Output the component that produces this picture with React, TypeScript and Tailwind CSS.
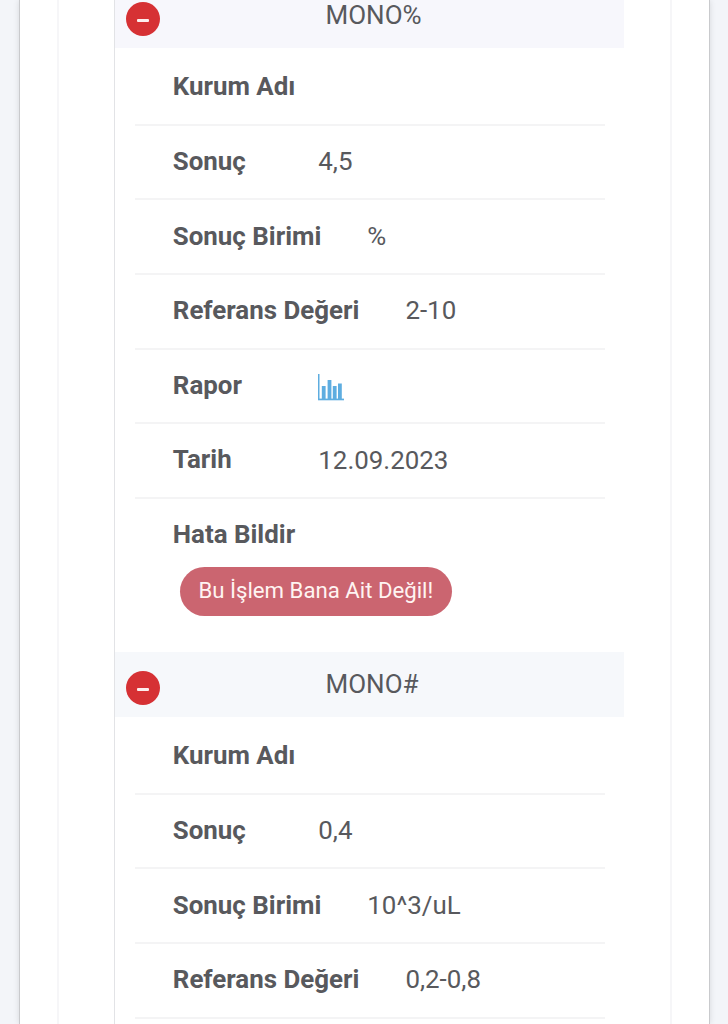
import type { ReactNode } from "react"

type Row = { label: string; value?: ReactNode }

function ChartIcon() {
  return (
    <svg className="mt-[5px] h-[27px] w-[27px]" viewBox="0 0 27 27" fill="#5eade0">
      <rect x="0" y="0" width="1.5" height="26" />
      <rect x="0" y="24.6" width="26" height="1.7" />
      <rect x="3.8" y="12" width="3.8" height="13" />
      <rect x="9.6" y="6" width="3.8" height="19" />
      <rect x="14.8" y="12" width="3.8" height="13" />
      <rect x="20" y="9.5" width="3.8" height="15.5" />
    </svg>
  )
}

const tests: { title: string; headerClass: string; rows: Row[]; canReport: boolean }[] = [
  {
    title: "MONO%",
    headerClass: "bg-[#f7f7fc]",
    canReport: true,
    rows: [
      { label: "Kurum Adı" },
      { label: "Sonuç", value: "4,5" },
      { label: "Sonuç Birimi", value: "%" },
      { label: "Referans Değeri", value: "2-10" },
      { label: "Rapor", value: <ChartIcon /> },
      { label: "Tarih", value: "12.09.2023" },
    ],
  },
  {
    title: "MONO#",
    headerClass: "bg-[#f6f8fb]",
    canReport: false,
    rows: [
      { label: "Kurum Adı" },
      { label: "Sonuç", value: "0,4" },
      { label: "Sonuç Birimi", value: "10^3/uL" },
      { label: "Referans Değeri", value: "0,2-0,8" },
    ],
  },
]

function TestBlock({ title, headerClass, rows, canReport }: (typeof tests)[number]) {
  return (
    <section className="h-[669px]">
      <header className={`flex h-[65px] w-[509px] items-center pl-[11px] ${headerClass}`}>
        <button
          className="mt-[7px] flex size-[34px] items-center justify-center rounded-full bg-[#d63134]"
          aria-label="Kapat"
        >
          <span className="mt-[2px] h-[3px] w-3 rounded-[1px] bg-[#fdeeee]" />
        </button>
        <span className="-mt-[2px] ml-[165.5px]">{title}</span>
      </header>

      <ul className="mt-[3px] ml-[19.5px] w-[470px]">
        {rows.map((row) => (
          <li
            key={row.label}
            className="flex h-[74.65px] items-center gap-[46px] border-b-2 border-[#f4f4f5] pl-[38.3px]"
          >
            <span className="min-w-[99.5px] pb-[2.2px] text-[25.9px] font-bold">{row.label}</span>
            <span className="pb-[1.5px] text-[25.9px]">{row.value}</span>
          </li>
        ))}
        {canReport && (
          <li className="pt-[19px] pl-[38.3px]">
            <div className="text-[25.9px] font-bold">Hata Bildir</div>
            <button className="mt-[17px] ml-[7px] flex h-[49px] w-[272px] items-center justify-center rounded-full bg-[#cb6570] pb-[2px] text-[22.2px] text-[#fff4f2]">
              Bu İşlem Bana Ait Değil!
            </button>
          </li>
        )}
      </ul>
    </section>
  )
}

export default function App() {
  return (
    <div className="h-[1024px] overflow-hidden bg-[#f3f5f9] pr-[18px] pl-[19px] font-[Roboto,sans-serif] text-[26px] leading-8 text-[#58595d]">
      <div className="h-full border-x border-[#c9cacd] bg-white pr-[37px] pl-[37px] shadow-[0_0_6px_rgba(0,0,0,0.12)]">
        <div className="flow-root h-full border-x-2 border-[#f6f6f8] pl-[55px]">
          <div className="-mt-[17px] border-l border-[#e2e3e6]">
            {tests.map((test) => (
              <TestBlock key={test.title} {...test} />
            ))}
          </div>
        </div>
      </div>
    </div>
  )
}
